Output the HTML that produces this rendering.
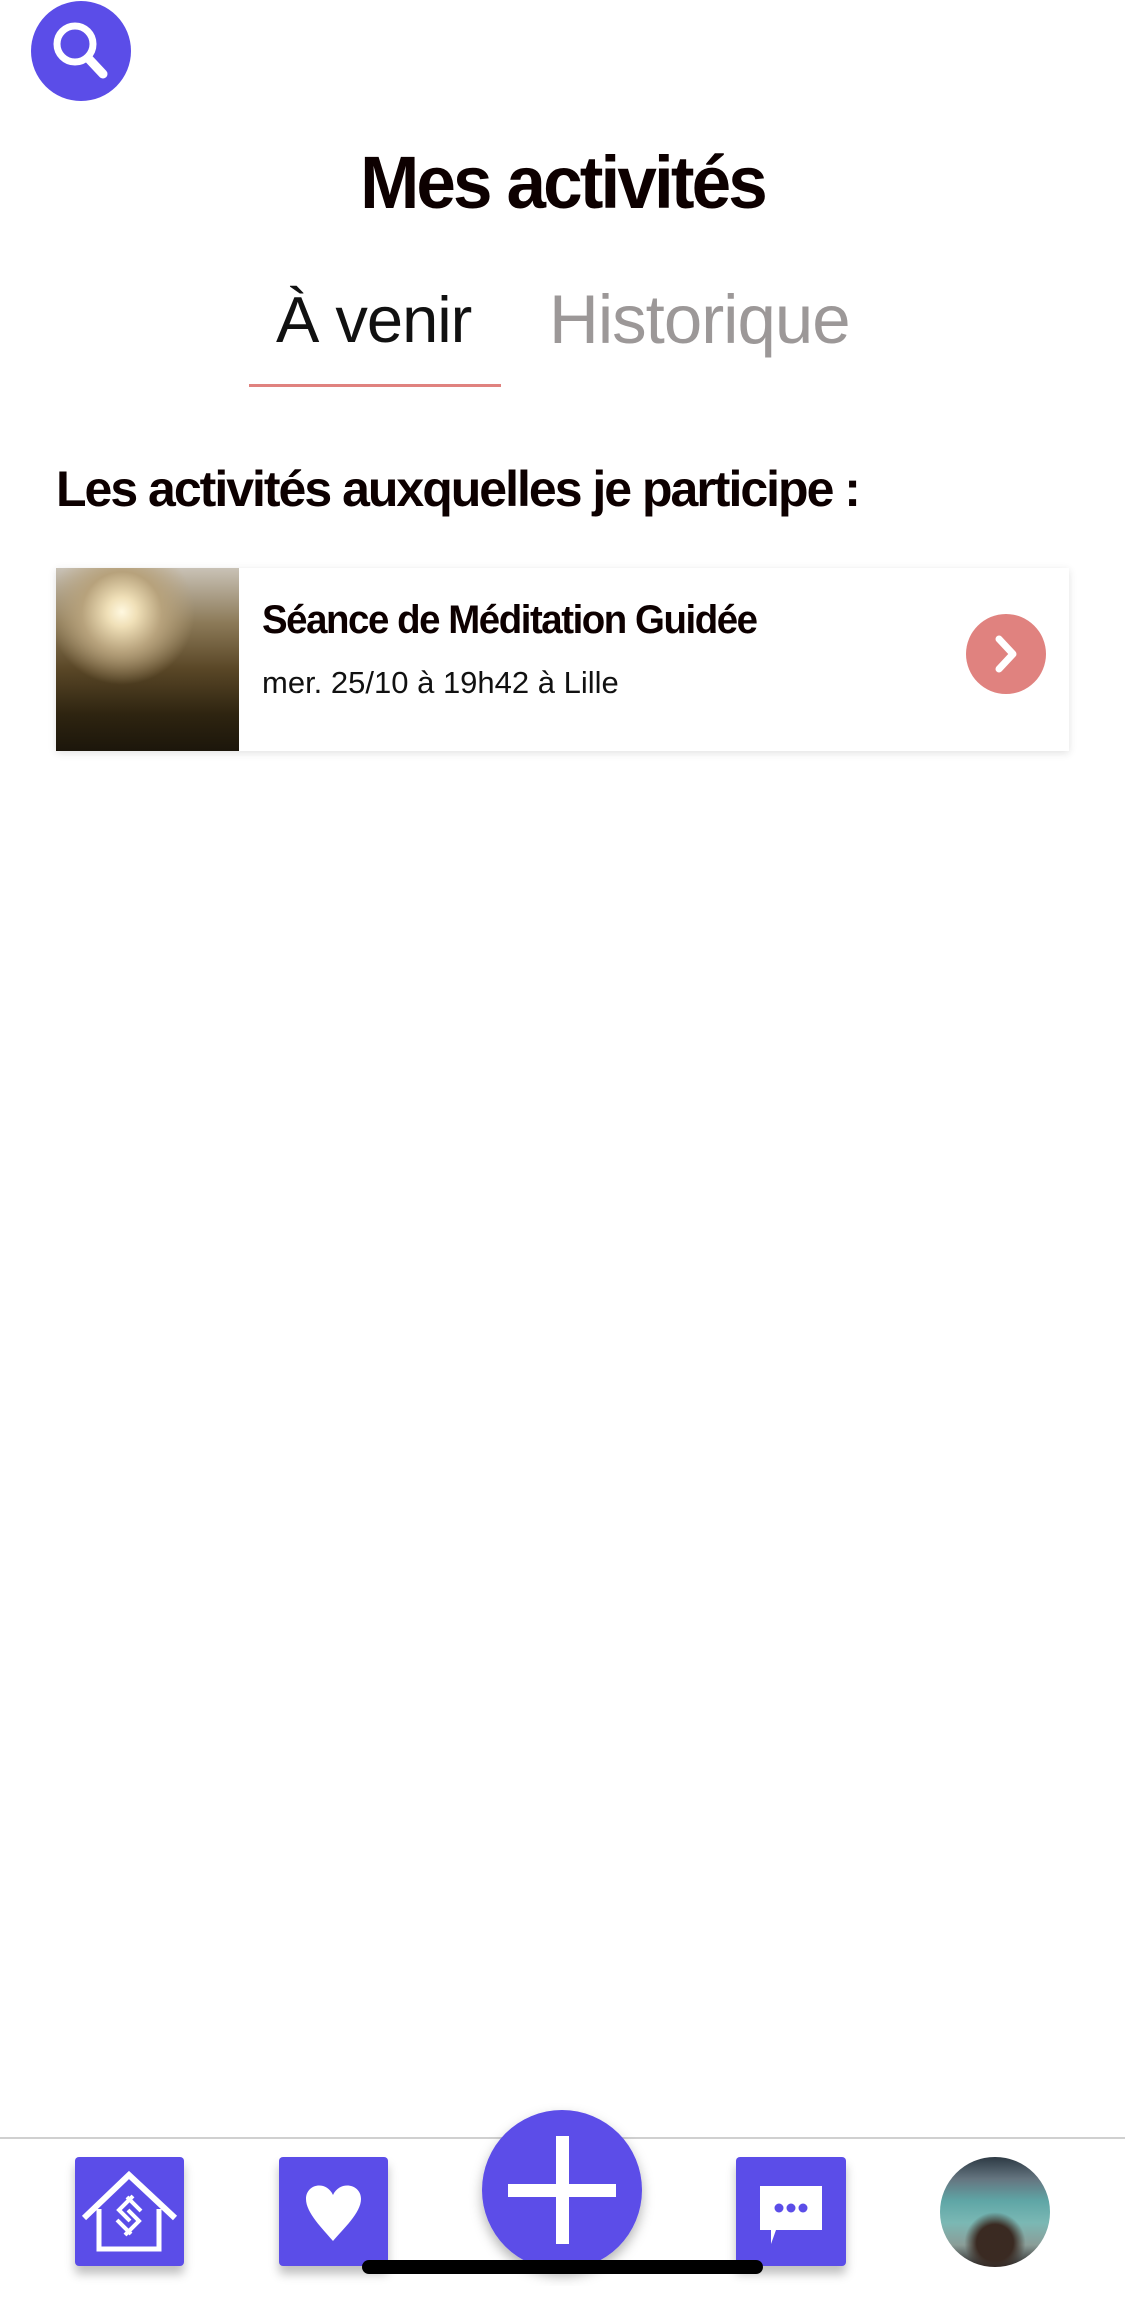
<!DOCTYPE html>
<html><head><meta charset="utf-8"><style>
*{margin:0;padding:0;box-sizing:border-box}
body{width:1125px;height:2300px;background:#fff;position:relative;overflow:hidden;font-family:"Liberation Sans",sans-serif}
.abs{position:absolute}
.cond{font-weight:bold;transform-origin:left top;white-space:nowrap;color:#0d0000}
</style></head><body>
<svg class="abs" style="left:31px;top:1px" width="100" height="100" viewBox="0 0 100 100">
<circle cx="50" cy="50" r="50" fill="#5b4de8"/>
<circle cx="44" cy="43" r="18" fill="none" stroke="#fff" stroke-width="7"/>
<line x1="57" y1="57" x2="72" y2="73" stroke="#fff" stroke-width="9" stroke-linecap="round"/>
</svg>
<div class="abs cond" style="left:0;width:1125px;top:140px;text-align:center;font-size:74px;letter-spacing:-3px;transform:scaleX(0.96);transform-origin:center top">Mes activités</div>
<div class="abs" style="left:276px;top:282px;font-size:65px;color:#111;font-weight:300;letter-spacing:-1px">À venir</div>
<div class="abs" style="left:549px;top:280px;font-size:69px;color:#9c9898;letter-spacing:-1px">Historique</div>
<div class="abs" style="left:249px;top:384px;width:252px;height:3px;background:#e0827f"></div>
<div class="abs cond" style="left:56px;top:460px;font-size:50px;letter-spacing:-2px;transform:scaleX(1.0)">Les activités auxquelles je participe :</div>
<div class="abs" style="left:56px;top:568px;width:1013px;height:183px;background:#fff;box-shadow:0 2px 8px rgba(0,0,0,0.12)">
 <div class="abs" style="left:0;top:0;width:183px;height:183px;background:radial-gradient(circle at 36% 24%,#fff8e0 0,#f0e0b8 8%,#b7a27c 22%,transparent 40%),linear-gradient(180deg,#c9c2b6 0%,#8c7a58 30%,#5a4727 55%,#2e2410 80%,#1c160b 100%)"></div>
 <div class="abs cond" style="left:206px;top:30px;font-size:40px;letter-spacing:-1.5px;transform:scaleX(0.96)">Séance de Méditation Guidée</div>
 <div class="abs" style="left:206px;top:97px;font-size:31px;color:#111">mer. 25/10 à 19h42 à Lille</div>
 <svg class="abs" style="left:910px;top:46px" width="80" height="80" viewBox="0 0 80 80"><circle cx="40" cy="40" r="40" fill="#e0827f"/><path d="M33 25 L47 40 L33 55" fill="none" stroke="#fff" stroke-width="7" stroke-linecap="round" stroke-linejoin="round"/></svg>
</div>
<div class="abs" style="left:0;top:2137px;width:1125px;height:2px;background:#d0d0d0"></div>
<div class="abs" style="left:75px;top:2157px;width:109px;height:109px;background:#5b4de8;border-radius:4px;box-shadow:0 8px 10px rgba(0,0,0,0.25)">
<svg width="109" height="109" viewBox="0 0 109 109"><path d="M9 61 L54 18 L100 61" fill="none" stroke="#fff" stroke-width="6"/><path d="M24 52 V92 H84 V52" fill="none" stroke="#fff" stroke-width="5"/><path d="M58 39 L44 53 L55 64 M50 78 L64 64 L53 53 M52 40 L66 54 M56 77 L42 63" fill="none" stroke="#fff" stroke-width="4"/></svg></div>
<div class="abs" style="left:279px;top:2157px;width:109px;height:109px;background:#5b4de8;border-radius:4px;box-shadow:0 8px 10px rgba(0,0,0,0.25)">
<svg width="109" height="109" viewBox="0 0 109 109"><path d="M54 84 C44 72 27 56 27 42 C27 27 47 23 54 38 C61 23 82 27 82 42 C82 56 64 72 54 84Z" fill="#fff"/></svg></div>
<svg class="abs" style="left:482px;top:2110px;overflow:visible" width="160" height="160" viewBox="0 0 160 160"><defs><filter id="s"><feDropShadow dx="0" dy="6" stdDeviation="6" flood-opacity="0.3"/></filter></defs><circle cx="80" cy="80" r="80" fill="#5b4de8" filter="url(#s)"/><rect x="74" y="26" width="13" height="108" fill="#fff"/><rect x="26" y="74" width="108" height="13" fill="#fff"/></svg>
<div class="abs" style="left:736px;top:2157px;width:110px;height:109px;background:#5b4de8;border-radius:4px;box-shadow:0 8px 10px rgba(0,0,0,0.25)">
<svg width="110" height="109" viewBox="0 0 110 109"><path d="M24 29 H86 V73 H40 L35 87 V73 H24Z" fill="#fff"/><circle cx="43" cy="51" r="4.5" fill="#5b4de8"/><circle cx="55" cy="51" r="4.5" fill="#5b4de8"/><circle cx="67" cy="51" r="4.5" fill="#5b4de8"/></svg></div>
<div class="abs" style="left:940px;top:2157px;width:110px;height:110px;border-radius:50%;background:radial-gradient(circle at 50% 78%,#3a2a22 0,#3a2a22 18%,transparent 30%),linear-gradient(180deg,#2d3a44 0%,#657580 20%,#5fa6a6 40%,#7bb8b4 60%,#8a9d98 80%,#2a2525 100%)"></div>
<div class="abs" style="left:362px;top:2260px;width:401px;height:14px;border-radius:7px;background:#000"></div>
</body></html>
